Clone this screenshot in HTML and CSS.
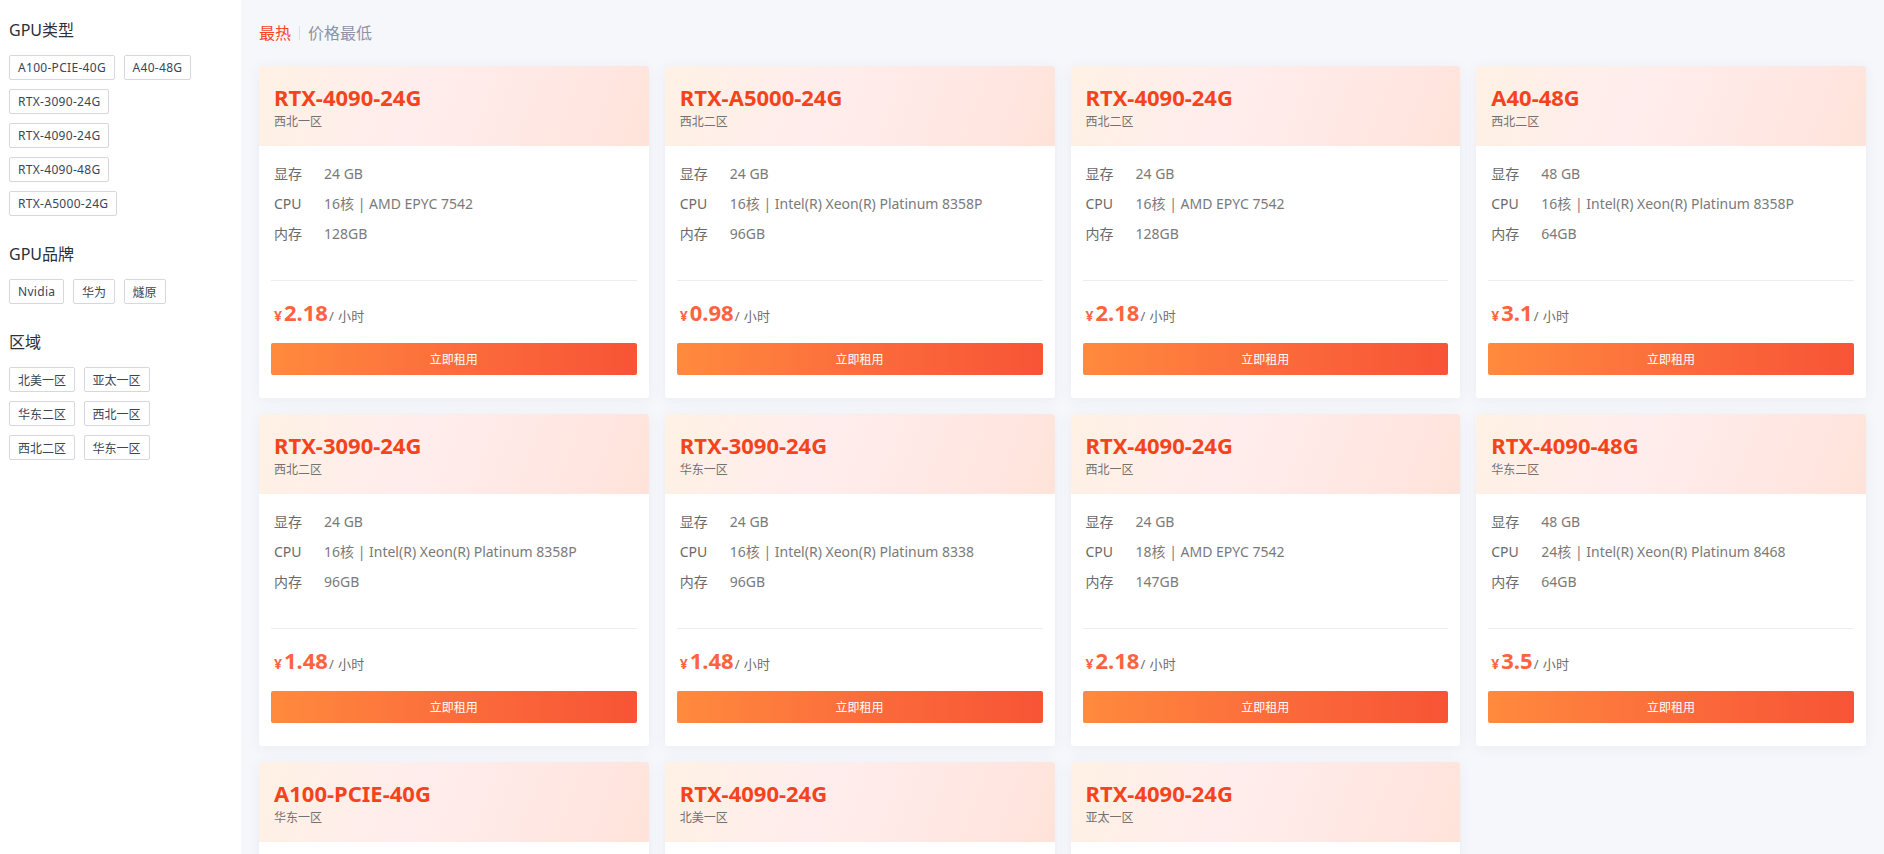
FILE: index.html
```html
<!DOCTYPE html>
<html lang="zh-CN">
<head>
<meta charset="utf-8">
<title>GPU 租用</title>
<link rel="stylesheet" href="styles.css">
</head>
<body>
<div class="layout">
  <aside class="sidebar">
    <section class="filter">
      <h3 class="filter-title">GPU类型</h3>
      <div class="tags">
        <span class="tag tag-latin">A100-PCIE-40G</span>
        <span class="tag tag-latin">A40-48G</span>
        <span class="tag tag-latin">RTX-3090-24G</span>
        <span class="tag tag-latin">RTX-4090-24G</span>
        <span class="tag tag-latin">RTX-4090-48G</span>
        <span class="tag tag-latin">RTX-A5000-24G</span>
      </div>
    </section>
    <section class="filter">
      <h3 class="filter-title">GPU品牌</h3>
      <div class="tags">
        <span class="tag tag-latin">Nvidia</span>
        <span class="tag">华为</span>
        <span class="tag">燧原</span>
      </div>
    </section>
    <section class="filter">
      <h3 class="filter-title">区域</h3>
      <div class="tags">
        <span class="tag">北美一区</span>
        <span class="tag">亚太一区</span>
        <span class="tag">华东二区</span>
        <span class="tag">西北一区</span>
        <span class="tag">西北二区</span>
        <span class="tag">华东一区</span>
      </div>
    </section>
  </aside>

  <main class="main">
    <div class="sort-tabs">
      <span class="sort-tab active">最热</span>
      <span class="sort-sep"></span>
      <span class="sort-tab">价格最低</span>
    </div>

    <div class="grid">
      <div class="card">
        <div class="card-head"><div class="card-title">RTX-4090-24G</div><div class="card-region">西北一区</div></div>
        <div class="card-body">
          <div class="specs">
            <div class="spec"><span class="spec-label">显存</span><span class="spec-value">24 GB</span></div>
            <div class="spec"><span class="spec-label">CPU</span><span class="spec-value">16核 | AMD EPYC 7542</span></div>
            <div class="spec"><span class="spec-label">内存</span><span class="spec-value">128GB</span></div>
          </div>
          <div class="price"><span class="price-cur">¥</span><span class="price-num">2.18</span><span class="price-unit">/ 小时</span></div>
          <button class="rent-btn">立即租用</button>
        </div>
      </div>

      <div class="card">
        <div class="card-head"><div class="card-title">RTX-A5000-24G</div><div class="card-region">西北二区</div></div>
        <div class="card-body">
          <div class="specs">
            <div class="spec"><span class="spec-label">显存</span><span class="spec-value">24 GB</span></div>
            <div class="spec"><span class="spec-label">CPU</span><span class="spec-value">16核 | Intel(R) Xeon(R) Platinum 8358P</span></div>
            <div class="spec"><span class="spec-label">内存</span><span class="spec-value">96GB</span></div>
          </div>
          <div class="price"><span class="price-cur">¥</span><span class="price-num">0.98</span><span class="price-unit">/ 小时</span></div>
          <button class="rent-btn">立即租用</button>
        </div>
      </div>

      <div class="card">
        <div class="card-head"><div class="card-title">RTX-4090-24G</div><div class="card-region">西北二区</div></div>
        <div class="card-body">
          <div class="specs">
            <div class="spec"><span class="spec-label">显存</span><span class="spec-value">24 GB</span></div>
            <div class="spec"><span class="spec-label">CPU</span><span class="spec-value">16核 | AMD EPYC 7542</span></div>
            <div class="spec"><span class="spec-label">内存</span><span class="spec-value">128GB</span></div>
          </div>
          <div class="price"><span class="price-cur">¥</span><span class="price-num">2.18</span><span class="price-unit">/ 小时</span></div>
          <button class="rent-btn">立即租用</button>
        </div>
      </div>

      <div class="card">
        <div class="card-head"><div class="card-title">A40-48G</div><div class="card-region">西北二区</div></div>
        <div class="card-body">
          <div class="specs">
            <div class="spec"><span class="spec-label">显存</span><span class="spec-value">48 GB</span></div>
            <div class="spec"><span class="spec-label">CPU</span><span class="spec-value">16核 | Intel(R) Xeon(R) Platinum 8358P</span></div>
            <div class="spec"><span class="spec-label">内存</span><span class="spec-value">64GB</span></div>
          </div>
          <div class="price"><span class="price-cur">¥</span><span class="price-num">3.1</span><span class="price-unit">/ 小时</span></div>
          <button class="rent-btn">立即租用</button>
        </div>
      </div>

      <div class="card">
        <div class="card-head"><div class="card-title">RTX-3090-24G</div><div class="card-region">西北二区</div></div>
        <div class="card-body">
          <div class="specs">
            <div class="spec"><span class="spec-label">显存</span><span class="spec-value">24 GB</span></div>
            <div class="spec"><span class="spec-label">CPU</span><span class="spec-value">16核 | Intel(R) Xeon(R) Platinum 8358P</span></div>
            <div class="spec"><span class="spec-label">内存</span><span class="spec-value">96GB</span></div>
          </div>
          <div class="price"><span class="price-cur">¥</span><span class="price-num">1.48</span><span class="price-unit">/ 小时</span></div>
          <button class="rent-btn">立即租用</button>
        </div>
      </div>

      <div class="card">
        <div class="card-head"><div class="card-title">RTX-3090-24G</div><div class="card-region">华东一区</div></div>
        <div class="card-body">
          <div class="specs">
            <div class="spec"><span class="spec-label">显存</span><span class="spec-value">24 GB</span></div>
            <div class="spec"><span class="spec-label">CPU</span><span class="spec-value">16核 | Intel(R) Xeon(R) Platinum 8338</span></div>
            <div class="spec"><span class="spec-label">内存</span><span class="spec-value">96GB</span></div>
          </div>
          <div class="price"><span class="price-cur">¥</span><span class="price-num">1.48</span><span class="price-unit">/ 小时</span></div>
          <button class="rent-btn">立即租用</button>
        </div>
      </div>

      <div class="card">
        <div class="card-head"><div class="card-title">RTX-4090-24G</div><div class="card-region">西北一区</div></div>
        <div class="card-body">
          <div class="specs">
            <div class="spec"><span class="spec-label">显存</span><span class="spec-value">24 GB</span></div>
            <div class="spec"><span class="spec-label">CPU</span><span class="spec-value">18核 | AMD EPYC 7542</span></div>
            <div class="spec"><span class="spec-label">内存</span><span class="spec-value">147GB</span></div>
          </div>
          <div class="price"><span class="price-cur">¥</span><span class="price-num">2.18</span><span class="price-unit">/ 小时</span></div>
          <button class="rent-btn">立即租用</button>
        </div>
      </div>

      <div class="card">
        <div class="card-head"><div class="card-title">RTX-4090-48G</div><div class="card-region">华东二区</div></div>
        <div class="card-body">
          <div class="specs">
            <div class="spec"><span class="spec-label">显存</span><span class="spec-value">48 GB</span></div>
            <div class="spec"><span class="spec-label">CPU</span><span class="spec-value">24核 | Intel(R) Xeon(R) Platinum 8468</span></div>
            <div class="spec"><span class="spec-label">内存</span><span class="spec-value">64GB</span></div>
          </div>
          <div class="price"><span class="price-cur">¥</span><span class="price-num">3.5</span><span class="price-unit">/ 小时</span></div>
          <button class="rent-btn">立即租用</button>
        </div>
      </div>

      <div class="card">
        <div class="card-head"><div class="card-title">A100-PCIE-40G</div><div class="card-region">华东一区</div></div>
        <div class="card-body">
          <div class="specs">
            <div class="spec"><span class="spec-label">显存</span><span class="spec-value">40 GB</span></div>
            <div class="spec"><span class="spec-label">CPU</span><span class="spec-value">16核 | Intel(R) Xeon(R) Platinum 8358P</span></div>
            <div class="spec"><span class="spec-label">内存</span><span class="spec-value">96GB</span></div>
          </div>
          <div class="price"><span class="price-cur">¥</span><span class="price-num">3.5</span><span class="price-unit">/ 小时</span></div>
          <button class="rent-btn">立即租用</button>
        </div>
      </div>

      <div class="card">
        <div class="card-head"><div class="card-title">RTX-4090-24G</div><div class="card-region">北美一区</div></div>
        <div class="card-body">
          <div class="specs">
            <div class="spec"><span class="spec-label">显存</span><span class="spec-value">24 GB</span></div>
            <div class="spec"><span class="spec-label">CPU</span><span class="spec-value">16核 | AMD EPYC 7542</span></div>
            <div class="spec"><span class="spec-label">内存</span><span class="spec-value">128GB</span></div>
          </div>
          <div class="price"><span class="price-cur">¥</span><span class="price-num">2.18</span><span class="price-unit">/ 小时</span></div>
          <button class="rent-btn">立即租用</button>
        </div>
      </div>

      <div class="card">
        <div class="card-head"><div class="card-title">RTX-4090-24G</div><div class="card-region">亚太一区</div></div>
        <div class="card-body">
          <div class="specs">
            <div class="spec"><span class="spec-label">显存</span><span class="spec-value">24 GB</span></div>
            <div class="spec"><span class="spec-label">CPU</span><span class="spec-value">16核 | AMD EPYC 7542</span></div>
            <div class="spec"><span class="spec-label">内存</span><span class="spec-value">128GB</span></div>
          </div>
          <div class="price"><span class="price-cur">¥</span><span class="price-num">2.18</span><span class="price-unit">/ 小时</span></div>
          <button class="rent-btn">立即租用</button>
        </div>
      </div>
    </div>
  </main>
</div>
</body>
</html>
```

FILE: styles.css
```css
* { box-sizing: border-box; }

html, body {
  margin: 0;
  padding: 0;
}

body {
  font-family: "Noto Sans", "Noto Sans CJK SC", sans-serif;
  background: #f6f7fb;
  color: #333;
}

.layout {
  display: flex;
  align-items: stretch;
  min-height: 100vh;
}

/* Sidebar */
.sidebar {
  flex: 0 0 241px;
  width: 241px;
  background: #ffffff;
  padding: 19px 32px 20px 9px;
}

.filter {
  margin-bottom: 27px;
}

.filter-title {
  margin: 0 0 14px;
  font-size: 16px;
  line-height: 22px;
  font-weight: 400;
  color: #2b303b;
}

.tags {
  display: flex;
  flex-wrap: wrap;
  gap: 9px 8.6px;
}

.tag {
  display: inline-flex;
  align-items: center;
  height: 25px;
  padding: 0 8px;
  border: 1px solid #d6d7e3;
  border-radius: 2px;
  font-size: 12px;
  color: #3a4559;
  white-space: nowrap;
}

.tag-latin {
  letter-spacing: 0.3px;
}

/* Main */
.main {
  flex: 1 1 auto;
  min-width: 0;
  padding: 22px 18px 30px;
}

.sort-tabs {
  display: flex;
  align-items: center;
  height: 22px;
  margin-bottom: 22px;
  font-size: 16px;
}

.sort-tab {
  color: #8c93a5;
  line-height: 22px;
}

.sort-tab.active {
  color: #f4461f;
}

.sort-sep {
  width: 1px;
  height: 14px;
  background: #dcdfe6;
  margin: 0 8px;
}

.grid {
  display: grid;
  grid-template-columns: repeat(4, 1fr);
  gap: 16px;
}

.card {
  background: #ffffff;
  border-radius: 3px;
  overflow: hidden;
  box-shadow: 0 2px 14px rgba(60, 70, 110, 0.06);
}

.card-head {
  height: 80px;
  padding: 17px 15px 0;
  background: linear-gradient(110deg, #fff1e4 0%, #ffeded 40%, #ffe9e6 65%, #ffe3da 100%);
}

.card-title {
  font-size: 22px;
  line-height: 28px;
  font-weight: 700;
  color: #f4431d;
}

.card-region {
  margin-top: 2px;
  font-size: 12px;
  line-height: 18px;
  color: #727272;
}

.card-body {
  padding: 12px 12px 23px;
}

.specs {
  padding: 0 3px;
  margin-bottom: 32px;
}

.spec {
  display: flex;
  height: 30px;
  align-items: center;
  font-size: 14px;
}

.spec-label {
  flex: 0 0 50px;
  color: #6a6a6a;
}

.spec-value {
  color: #7a7a7a;
  white-space: nowrap;
}

.price {
  border-top: 1px solid #ececf3;
  padding: 16px 3px 0;
  height: 48px;
  display: flex;
  align-items: baseline;
  line-height: 30px;
}

.price-cur {
  font-size: 14px;
  font-weight: 700;
  color: #fe6340;
  margin-right: 2px;
}

.price-num {
  font-size: 22px;
  font-weight: 700;
  color: #fe6340;
}

.price-unit {
  font-size: 13px;
  color: #6e6e6e;
  margin-left: 1px;
  letter-spacing: 0.4px;
}

.rent-btn {
  display: block;
  width: 100%;
  height: 32px;
  margin-top: 15px;
  border: 0;
  border-radius: 2px;
  background: linear-gradient(90deg, #ff8a3d 0%, #fb6a3b 55%, #f75435 100%);
  color: #ffffff;
  font-family: inherit;
  font-size: 12px;
  cursor: pointer;
}
```
